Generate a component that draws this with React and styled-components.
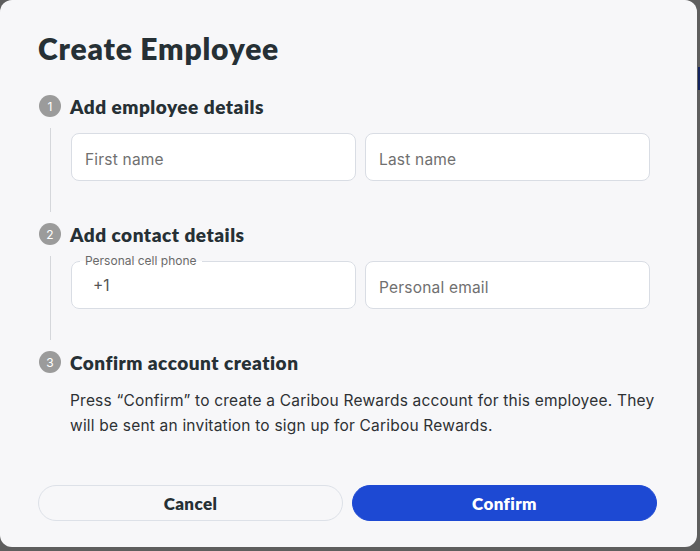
import React from "react";
import styled, { createGlobalStyle } from "styled-components";

const GlobalStyle = createGlobalStyle`
  html, body {
    margin: 0;
    padding: 0;
    background: #5e5e5e;
  }
  body {
    font-family: "Inter", "Liberation Sans", sans-serif;
    -webkit-font-smoothing: antialiased;
  }
`;

const HEAD_FONT = `"Lato", "Inter", sans-serif`;

const steps = [
  { n: 1, title: "Add employee details" },
  { n: 2, title: "Add contact details" },
  { n: 3, title: "Confirm account creation" },
];

function App() {
  return (
    <>
      <GlobalStyle />
      <Backdrop>
        <PageStrip />
        <Dialog>
          <Title>Create Employee</Title>

          <Step>
            <Badge>{steps[0].n}</Badge>
            <StepTitle>{steps[0].title}</StepTitle>
            <Rail />
            <StepBody>
              <FieldRow>
                <Field>
                  <Placeholder>First name</Placeholder>
                </Field>
                <Field>
                  <Placeholder>Last name</Placeholder>
                </Field>
              </FieldRow>
            </StepBody>
          </Step>

          <Step>
            <Badge>{steps[1].n}</Badge>
            <StepTitle>{steps[1].title}</StepTitle>
            <Rail />
            <StepBody>
              <FieldRow>
                <Field $outlined>
                  <Notch>
                    <legend>Personal cell phone</legend>
                  </Notch>
                  <FieldLabel>Personal cell phone</FieldLabel>
                  <Value>+1</Value>
                </Field>
                <Field>
                  <Placeholder>Personal email</Placeholder>
                </Field>
              </FieldRow>
            </StepBody>
          </Step>

          <Step>
            <Badge>{steps[2].n}</Badge>
            <StepTitle>{steps[2].title}</StepTitle>
            <StepBody $last>
              <Note>
                Press “Confirm” to create a Caribou Rewards account for this
                employee. They will be sent an invitation to sign up for Caribou
                Rewards.
              </Note>
            </StepBody>
          </Step>

          <Actions>
            <Button>Cancel</Button>
            <Button $primary>Confirm</Button>
          </Actions>
        </Dialog>
      </Backdrop>
    </>
  );
}

export default App;

const Backdrop = styled.div`
  position: relative;
  width: 700px;
  height: 551px;
  overflow: hidden;
  background: #5e5e5e;
`;

/* a sliver of the page behind the modal, peeking out on the right */
const PageStrip = styled.div`
  position: absolute;
  right: 0;
  top: 67px;
  width: 2px;
  height: 23px;
  background: #13235e;
`;

const Dialog = styled.div`
  position: relative;
  width: 697px;
  height: 547px;
  box-sizing: border-box;
  padding: 30px 40px 0 38px;
  background: #f7f7f9;
  border-radius: 12px;
  display: flex;
  flex-direction: column;
`;

const Title = styled.h1`
  margin: 0 0 26px;
  font-family: ${HEAD_FONT};
  font-size: 30px;
  line-height: 36px;
  font-weight: 800;
  letter-spacing: 0.8px;
  color: #263035;
`;

const Step = styled.div`
  display: grid;
  grid-template-columns: 24px 1fr;
  grid-template-rows: 28px auto;
  column-gap: 8px;
`;

const Badge = styled.div`
  align-self: center;
  justify-self: center;
  width: 22px;
  height: 22px;
  border-radius: 50%;
  background: #9b9b9b;
  color: #fff;
  font-size: 12px;
  display: flex;
  align-items: center;
  justify-content: center;
`;

const StepTitle = styled.h2`
  margin: 0;
  align-self: center;
  font-family: ${HEAD_FONT};
  font-size: 19px;
  font-weight: 800;
  letter-spacing: 0.5px;
  color: #263035;
`;

const Rail = styled.div`
  justify-self: center;
  width: 1px;
  margin: 8px 0;
  background: #d5d7db;
`;

const StepBody = styled.div`
  grid-column: 2;
  padding: 13px 0 39px;
  ${(p) => p.$last && `padding: 12px 0 0;`}
`;

const FieldRow = styled.div`
  display: grid;
  grid-template-columns: 1fr 1fr;
  gap: 9px;
  margin-left: 1px;
  margin-right: 7px;
`;

const Field = styled.div`
  position: relative;
  height: 48px;
  box-sizing: border-box;
  border: 1px solid ${(p) => (p.$outlined ? "transparent" : "#d9dde4")};
  border-radius: 8px;
  background: #fff;
  display: flex;
  align-items: center;
  padding: 0 13px;
`;

const Notch = styled.fieldset`
  position: absolute;
  inset: -7px -1px -1px -1px;
  margin: 0;
  padding: 0 8px;
  border: 1px solid #d9dde4;
  border-radius: 8px;
  pointer-events: none;

  legend {
    padding: 0 5px;
    font-size: 12px;
    line-height: 12px;
    visibility: hidden;
    white-space: nowrap;
  }
`;

const FieldLabel = styled.span`
  position: absolute;
  left: 13px;
  top: -8px;
  font-size: 12px;
  line-height: 14px;
  color: #6a6a6a;
`;

const Placeholder = styled.span`
  padding-top: 5px;
  font-size: 15.5px;
  letter-spacing: 0.2px;
  color: #707070;
`;

const Value = styled.span`
  padding-left: 8px;
  font-size: 15.5px;
  color: #555;
`;

const Note = styled.p`
  margin: 0;
  font-size: 15.5px;
  line-height: 25px;
  letter-spacing: 0.2px;
  color: #2e3134;
`;

const Actions = styled.div`
  display: grid;
  grid-template-columns: 1fr 1fr;
  gap: 9px;
  margin-top: 47px;
`;

const Button = styled.button`
  height: 36px;
  border-radius: 18px;
  border: 1px solid ${(p) => (p.$primary ? "#1d49d3" : "#dde1e8")};
  background: ${(p) => (p.$primary ? "#1d49d3" : "transparent")};
  color: ${(p) => (p.$primary ? "#fff" : "#263035")};
  font-family: ${HEAD_FONT};
  font-size: 17px;
  font-weight: 800;
  letter-spacing: 0.4px;
  cursor: pointer;
`;
